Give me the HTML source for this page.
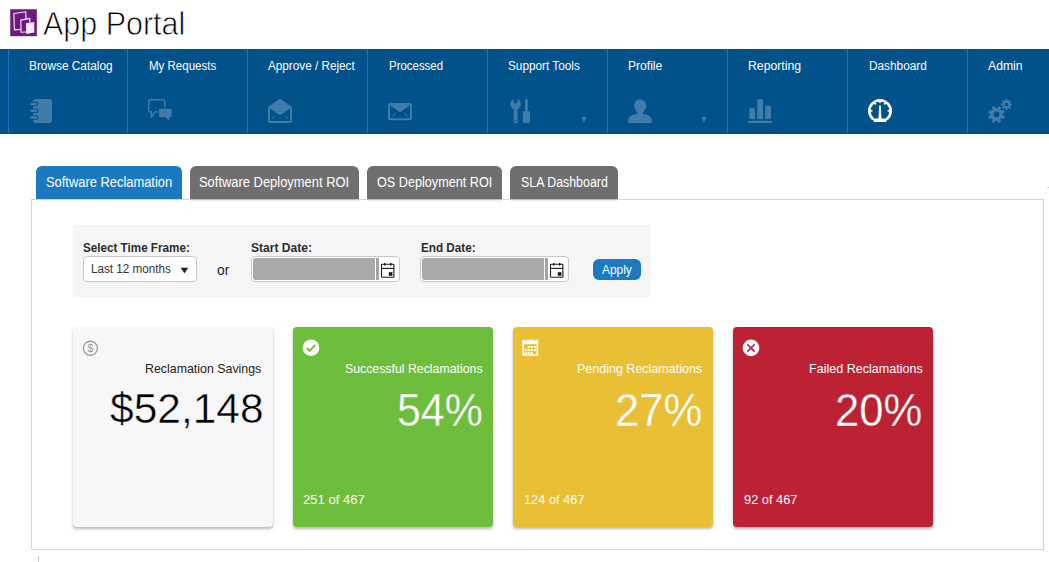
<!DOCTYPE html>
<html><head><meta charset="utf-8">
<style>
*{margin:0;padding:0;box-sizing:border-box}
html,body{width:1049px;height:562px;overflow:hidden;background:#fff;font-family:"Liberation Sans",sans-serif}
.a{position:absolute}
.s{position:absolute;overflow:visible}
.t{position:absolute;white-space:nowrap;transform-origin:0 0}
#nav{left:0;top:49px;width:1049px;height:85px;background:#01518a}
.sep{top:49px;width:1px;height:84px;background:#1a73c2}
.tab{top:166px;height:33px;border-radius:6px 6px 0 0}
#panel{left:31px;top:199px;width:1013px;height:351px;border:1px solid #d6d3d3}
#filter{left:73px;top:225px;width:578px;height:72px;background:#f5f5f5}
.card{top:327px;width:200px;height:200px;border-radius:4px;box-shadow:0 2px 3px rgba(0,0,0,0.28)}
.inp{top:256px;height:26px;border:1px solid #c9c9c9;border-radius:4px;background:#fff}
.gray{top:258px;height:22px;background:#a9a9a9;border-radius:3px 0 0 3px}
</style></head>
<body>
<div class="a" id="nav"></div>
<div class="a" style="left:0;top:133px;width:1049px;height:1px;background:#004a80"></div>
<div class="a sep" style="left:8px"></div><div class="a sep" style="left:127px"></div><div class="a sep" style="left:247px"></div><div class="a sep" style="left:367px"></div><div class="a sep" style="left:487px"></div><div class="a sep" style="left:607px"></div><div class="a sep" style="left:727px"></div><div class="a sep" style="left:847px"></div><div class="a sep" style="left:967px"></div>

<svg class="s" style="left:0;top:49px" width="1049" height="85" viewBox="0 49 1049 85">
 <!-- notebook -->
 <rect x="33" y="99" width="19" height="24" rx="3" fill="#407ca7"/>
 <g stroke-linecap="round">
  <line x1="31.5" y1="104" x2="36" y2="104" stroke="#01518a" stroke-width="4.6"/>
  <line x1="31.5" y1="110.8" x2="36" y2="110.8" stroke="#01518a" stroke-width="4.6"/>
  <line x1="31.5" y1="117.5" x2="36" y2="117.5" stroke="#01518a" stroke-width="4.6"/>
  <line x1="31.5" y1="104" x2="36" y2="104" stroke="#407ca7" stroke-width="2.4"/>
  <line x1="31.5" y1="110.8" x2="36" y2="110.8" stroke="#407ca7" stroke-width="2.4"/>
  <line x1="31.5" y1="117.5" x2="36" y2="117.5" stroke="#407ca7" stroke-width="2.4"/>
 </g>
 <!-- chat -->
 <path d="M150.5,99.7 H163 a1.8,1.8 0 0 1 1.8,1.8 V110 a1.8,1.8 0 0 1 -1.8,1.8 H155.5 L151.3,117 V111.8 H150.5 a1.8,1.8 0 0 1 -1.8,-1.8 V101.5 a1.8,1.8 0 0 1 1.8,-1.8 Z" fill="none" stroke="#407ca7" stroke-width="1.5" stroke-linejoin="round"/>
 <path d="M160,108.2 H170.5 a1.6,1.6 0 0 1 1.6,1.6 V116.2 a1.6,1.6 0 0 1 -1.6,1.6 H169.6 V122.4 L165.2,117.8 H160 a1.6,1.6 0 0 1 -1.6,-1.6 V109.8 a1.6,1.6 0 0 1 1.6,-1.6 Z" fill="#407ca7" stroke="#01518a" stroke-width="1.2"/>
 <!-- open envelope -->
 <path d="M269,107.5 L280,99.8 L291,107.5 V121 a1,1 0 0 1 -1,1 H270 a1,1 0 0 1 -1,-1 Z" fill="none" stroke="#407ca7" stroke-width="2" stroke-linejoin="round"/>
 <path d="M269,107.5 L280,99.8 L291,107.5 L280,114.8 Z" fill="#407ca7" stroke="#407ca7" stroke-width="1" stroke-linejoin="round"/>
 <line x1="272.5" y1="118.5" x2="275.5" y2="115.3" stroke="#407ca7" stroke-width="1"/>
 <line x1="287.5" y1="118.5" x2="284.5" y2="115.3" stroke="#407ca7" stroke-width="1"/>
 <!-- envelope -->
 <rect x="389" y="104" width="22" height="15.2" rx="1.5" fill="none" stroke="#407ca7" stroke-width="2"/>
 <path d="M389.5,104.5 H410.5 L400,111.8 Z" fill="#407ca7" stroke="#407ca7" stroke-width="1" stroke-linejoin="round"/>
 <line x1="392.5" y1="116.5" x2="395.5" y2="113.3" stroke="#407ca7" stroke-width="1"/>
 <line x1="407.5" y1="116.5" x2="404.5" y2="113.3" stroke="#407ca7" stroke-width="1"/>
 <!-- tools -->
 <path d="M513.8,99 A5.6,5.6 0 0 0 513.6,109.2 V121.4 a2,2 0 0 0 4,0 V109.2 A5.6,5.6 0 0 0 517.4,99 V103.2 H513.8 Z" fill="#407ca7"/>
 <circle cx="515.6" cy="120.8" r="0.8" fill="#01518a"/>
 <rect x="525" y="99" width="2.8" height="12" rx="0.9" fill="#407ca7"/>
 <rect x="522.8" y="111" width="7.3" height="12.1" rx="2" fill="#407ca7"/>
 <path d="M581,117 H586.8 L583.9,122.4 Z" fill="#407ca7"/>
 <path d="M701,117 H706.8 L703.9,122.4 Z" fill="#407ca7"/>
 <!-- person -->
 <path d="M640,99.6 c-3.6,0 -5.6,2.6 -5.6,6 c-0.9,0.3 -0.8,2.2 0.3,2.4 c0.6,2.2 1.8,3.6 2.6,4.3 V113.8 C633,114.8 628.2,116 628.2,120.5 V122.9 H651.8 V120.5 C651.8,116 647,114.8 643,113.8 V112.3 c0.8,-0.7 2,-2.1 2.6,-4.3 c1.1,-0.2 1.2,-2.1 0.3,-2.4 c0,-3.4 -2.3,-6 -5.9,-6 Z" fill="#407ca7"/>
 <!-- bar chart -->
 <rect x="749.3" y="108" width="5.7" height="11" rx="1.5" fill="#407ca7"/>
 <rect x="757.2" y="99" width="5.8" height="20" rx="1.5" fill="#407ca7"/>
 <rect x="765.2" y="105.6" width="5.8" height="13.4" rx="1.5" fill="#407ca7"/>
 <rect x="748" y="120.8" width="24" height="2.1" rx="0.8" fill="#407ca7"/>
 <!-- gauge -->
 <path d="M873.2,119.2 A10.7,10.7 0 1 1 886.8,119.2" fill="none" stroke="#fff" stroke-width="2.6"/>
 <path d="M872.6,118.4 H887.4 L886,122 H874 Z" fill="#fff"/>
 <path d="M879.2,105.6 H880.8 L881.6,120 H878.4 Z" fill="#fff"/>
 <g stroke="#fff" stroke-width="1.7">
  <line x1="880" y1="100.5" x2="880" y2="103"/>
  <line x1="874.3" y1="102.6" x2="875.7" y2="104.4"/>
  <line x1="885.7" y1="102.6" x2="884.3" y2="104.4"/>
  <line x1="870" y1="110.8" x2="872.4" y2="110.8"/>
  <line x1="890" y1="110.8" x2="887.6" y2="110.8"/>
 </g>
 <!-- gears -->
 <g transform="translate(988,99)" fill="#407ca7" fill-rule="evenodd">
  <path d="M14.64,16.33 L16.88,17.44 L15.80,20.05 L13.43,19.26 L12.26,20.43 L13.05,22.80 L10.44,23.88 L9.33,21.64 L7.67,21.64 L6.56,23.88 L3.95,22.80 L4.74,20.43 L3.57,19.26 L1.20,20.05 L0.12,17.44 L2.36,16.33 L2.36,14.67 L0.12,13.56 L1.20,10.95 L3.57,11.74 L4.74,10.57 L3.95,8.20 L6.56,7.12 L7.67,9.36 L9.33,9.36 L10.44,7.12 L13.05,8.20 L12.26,10.57 L13.43,11.74 L15.80,10.95 L16.88,13.56 L14.64,14.67 Z M11.40,15.50 A2.9,2.9 0 1,0 5.60,15.50 A2.9,2.9 0 1,0 11.40,15.50 Z"/>
  <path d="M22.37,4.47 L24.02,4.58 L24.02,6.42 L22.37,6.53 L21.96,7.51 L23.06,8.76 L21.76,10.06 L20.51,8.96 L19.53,9.37 L19.42,11.02 L17.58,11.02 L17.47,9.37 L16.49,8.96 L15.24,10.06 L13.94,8.76 L15.04,7.51 L14.63,6.53 L12.98,6.42 L12.98,4.58 L14.63,4.47 L15.04,3.49 L13.94,2.24 L15.24,0.94 L16.49,2.04 L17.47,1.63 L17.58,-0.02 L19.42,-0.02 L19.53,1.63 L20.51,2.04 L21.76,0.94 L23.06,2.24 L21.96,3.49 Z M20.20,5.50 A1.7,1.7 0 1,0 16.80,5.50 A1.7,1.7 0 1,0 20.20,5.50 Z"/>
 </g>
</svg>


<svg class="s" style="left:9px;top:8px" width="29" height="29" viewBox="9 8 29 29">
 <rect x="9.6" y="8.6" width="27.8" height="28" fill="#d8e4dc"/>
 <rect x="10.3" y="9.3" width="26.5" height="26.8" fill="#6d1a7e"/>
 <path d="M13.9,13.5 L25.8,11.8 L26.3,29 L14.4,29.9 Z" fill="none" stroke="#efe4f1" stroke-width="1.15" stroke-linejoin="round"/>
 <path d="M20.8,20.1 L29.8,18.4 L30.1,31.7 L21.1,32.3 Z" fill="#6d1a7e" stroke="#efe4f1" stroke-width="1.15" stroke-linejoin="round"/>
 <path d="M26,23.4 L34.2,22 L34.3,32.5 L26.2,34 Z" fill="#f3eef4"/>
 <path d="M26,23.4 L29.9,22.7 L29.9,24.5 L26,25 Z" fill="#efe4f1"/>
</svg>

<div class="a tab" style="left:36px;width:146px;background:#1b79c2"></div>
<div class="a tab" style="left:190px;width:169px;background:#6f6f6f"></div>
<div class="a tab" style="left:367px;width:135px;background:#6f6f6f"></div>
<div class="a tab" style="left:510px;width:108px;background:#6f6f6f"></div>
<div class="a" id="panel"></div>
<div class="a" style="left:190px;top:199px;width:169px;height:3px;background:linear-gradient(rgba(0,0,0,0.13),rgba(0,0,0,0))"></div>
<div class="a" style="left:367px;top:199px;width:135px;height:3px;background:linear-gradient(rgba(0,0,0,0.13),rgba(0,0,0,0))"></div>
<div class="a" style="left:510px;top:199px;width:108px;height:3px;background:linear-gradient(rgba(0,0,0,0.13),rgba(0,0,0,0))"></div>
<div class="a" style="left:1047px;top:187px;width:2px;height:1px;background:#d0cccc"></div>
<div class="a" style="left:38px;top:556px;width:1px;height:6px;background:#c8c8c8"></div>
<div class="a" id="filter"></div>
<div class="a" style="left:83px;top:256px;width:114px;height:26px;border:1px solid #c9c9c9;border-radius:4px;background:#fff"></div>
<svg class="s" style="left:180px;top:267px" width="10" height="8" viewBox="180 267 10 8"><path d="M180.7,267.8 H188.2 L184.45,273.6 Z" fill="#222"/></svg>
<div class="a inp" style="left:251px;width:149px"></div>
<div class="a gray" style="left:253px;width:122px"></div>
<div class="a" style="left:376px;top:258px;width:3px;height:22px;background:#a3a3a3"></div>
<div class="a inp" style="left:420px;width:149px"></div>
<div class="a gray" style="left:422px;width:122px"></div>
<div class="a" style="left:545px;top:258px;width:3px;height:22px;background:#a3a3a3"></div>
<svg class="s" style="left:370px;top:254px" width="210" height="30" viewBox="370 254 210 30">
 <g fill="none" stroke="#1a1a1a" stroke-width="1.1">
  <rect x="381.5" y="264.3" width="12.4" height="13" rx="0.8"/>
  <line x1="381.5" y1="268.4" x2="393.9" y2="268.4"/>
  <line x1="550.5" y1="268.4" x2="562.9" y2="268.4"/>
  <rect x="550.5" y="264.3" width="12.4" height="13" rx="0.8"/>
 </g>
 <g fill="#1a1a1a">
  <rect x="384" y="263" width="1.4" height="2.6"/><rect x="390" y="263" width="1.4" height="2.6"/>
  <rect x="388.8" y="272.2" width="3.6" height="3.6"/>
  <rect x="553" y="263" width="1.4" height="2.6"/><rect x="559" y="263" width="1.4" height="2.6"/>
  <rect x="557.8" y="272.2" width="3.6" height="3.6"/>
 </g>
</svg>
<div class="a" style="left:593px;top:259px;width:48px;height:21px;background:#1b79c2;border-radius:6px"></div>
<div class="a card" style="left:73px;background:#f7f7f7"></div>
<div class="a card" style="left:293px;background:#6ebe3d"></div>
<div class="a card" style="left:513px;background:#e9bf35"></div>
<div class="a card" style="left:733px;background:#bd2234"></div>

<svg class="s" style="left:0;top:320px" width="1049" height="50" viewBox="0 320 1049 50">
 <circle cx="90.4" cy="348.3" r="7" fill="none" stroke="#a0a0a0" stroke-width="1.4"/>
 <text x="90.4" y="352.3" font-size="10.5" text-anchor="middle" fill="#999" font-family="Liberation Sans">$</text>
 <circle cx="311" cy="347.7" r="8.3" fill="#fff"/>
 <path d="M306.8,348 L309.6,350.9 L315.2,344.8" fill="none" stroke="#6ebe3d" stroke-width="1.9"/>
 <path d="M522.3,339.8 H524.6 L525.6,341 L526.6,339.8 H534.2 L535.2,341 L536.2,339.8 H538.2 V355.8 H522.3 Z" fill="#fff"/>
 <rect x="524.1" y="344.2" width="12.4" height="10.1" fill="#e9bf35"/>
 <rect x="527.6" y="346" width="2.1" height="2" fill="#fff"/><rect x="530.7" y="346" width="2.1" height="2" fill="#fff"/><rect x="533.9" y="346" width="2.1" height="2" fill="#fff"/><rect x="524.7" y="349.2" width="2.1" height="2" fill="#fff"/><rect x="527.6" y="349.2" width="2.1" height="2" fill="#fff"/><rect x="530.7" y="349.2" width="2.1" height="2" fill="#fff"/><rect x="533.9" y="349.2" width="2.1" height="2" fill="#fff"/><rect x="524.7" y="352.1" width="2.1" height="2" fill="#fff"/><rect x="527.6" y="352.1" width="2.1" height="2" fill="#fff"/><rect x="530.7" y="352.1" width="2.1" height="2" fill="#fff"/>
 <circle cx="751" cy="347.9" r="8.3" fill="#fff"/>
 <path d="M747.3,344.2 L754.7,351.6 M754.7,344.2 L747.3,351.6" stroke="#bd2234" stroke-width="1.6"/>
</svg>

<div class="t" style="left:43.00px;top:7px;font-size:33px;line-height:33px;font-weight:normal;color:#000;transform:scaleX(0.9230);-webkit-text-stroke:0.8px #fff;">App Portal</div><div class="t" style="left:29.30px;top:60px;font-size:12px;line-height:12px;font-weight:normal;color:#fff;transform:scaleX(0.9877);">Browse Catalog</div><div class="t" style="left:148.60px;top:60px;font-size:12px;line-height:12px;font-weight:normal;color:#fff;transform:scaleX(0.9597);">My Requests</div><div class="t" style="left:268.20px;top:60px;font-size:12px;line-height:12px;font-weight:normal;color:#fff;transform:scaleX(0.9768);">Approve / Reject</div><div class="t" style="left:388.60px;top:60px;font-size:12px;line-height:12px;font-weight:normal;color:#fff;transform:scaleX(0.9532);">Processed</div><div class="t" style="left:507.70px;top:60px;font-size:12px;line-height:12px;font-weight:normal;color:#fff;transform:scaleX(0.9812);">Support Tools</div><div class="t" style="left:628.30px;top:60px;font-size:12px;line-height:12px;font-weight:normal;color:#fff;transform:scaleX(1.0076);">Profile</div><div class="t" style="left:748.20px;top:60px;font-size:12px;line-height:12px;font-weight:normal;color:#fff;transform:scaleX(1.0203);">Reporting</div><div class="t" style="left:868.60px;top:60px;font-size:12px;line-height:12px;font-weight:normal;color:#fff;transform:scaleX(0.9857);">Dashboard</div><div class="t" style="left:988.30px;top:60px;font-size:12px;line-height:12px;font-weight:normal;color:#fff;transform:scaleX(1.0168);">Admin</div><div class="t" style="left:46.10px;top:175px;font-size:14px;line-height:14px;font-weight:normal;color:#fff;transform:scaleX(0.9209);">Software Reclamation</div><div class="t" style="left:199.40px;top:175px;font-size:14px;line-height:14px;font-weight:normal;color:#fff;transform:scaleX(0.9231);">Software Deployment ROI</div><div class="t" style="left:377.40px;top:175px;font-size:14px;line-height:14px;font-weight:normal;color:#fff;transform:scaleX(0.9036);">OS Deployment ROI</div><div class="t" style="left:520.60px;top:175px;font-size:14px;line-height:14px;font-weight:normal;color:#fff;transform:scaleX(0.8852);">SLA Dashboard</div><div class="t" style="left:83.20px;top:242px;font-size:12px;line-height:12px;font-weight:bold;color:#2b2b2b;transform:scaleX(0.9721);">Select Time Frame:</div><div class="t" style="left:251.30px;top:242px;font-size:12px;line-height:12px;font-weight:bold;color:#2b2b2b;transform:scaleX(1.0053);">Start Date:</div><div class="t" style="left:420.70px;top:242px;font-size:12px;line-height:12px;font-weight:bold;color:#2b2b2b;transform:scaleX(0.9744);">End Date:</div><div class="t" style="left:90.50px;top:263px;font-size:12px;line-height:12px;font-weight:normal;color:#333;transform:scaleX(0.9738);">Last 12 months</div><div class="t" style="left:217.20px;top:263px;font-size:14px;line-height:14px;font-weight:normal;color:#222;transform:scaleX(0.9854);">or</div><div class="t" style="left:601.80px;top:263px;font-size:13px;line-height:13px;font-weight:normal;color:#fff;transform:scaleX(0.9146);">Apply</div><div class="t" style="left:145.35px;top:362px;font-size:13px;line-height:13px;font-weight:normal;color:#222;transform:scaleX(0.9522);">Reclamation Savings</div><div class="t" style="left:344.60px;top:362px;font-size:13px;line-height:13px;font-weight:normal;color:#fff;transform:scaleX(0.9470);">Successful Reclamations</div><div class="t" style="left:577.04px;top:362px;font-size:13px;line-height:13px;font-weight:normal;color:#fff;transform:scaleX(0.9616);">Pending Reclamations</div><div class="t" style="left:808.53px;top:362px;font-size:13px;line-height:13px;font-weight:normal;color:#fff;transform:scaleX(0.9653);">Failed Reclamations</div><div class="t" style="left:110.30px;top:387px;font-size:43px;line-height:43px;font-weight:normal;color:#000;transform:scaleX(0.9882);-webkit-text-stroke:0.5px #f7f7f7;">$52,148</div><div class="t" style="left:396.77px;top:387px;font-size:46px;line-height:46px;font-weight:normal;color:#fff;transform:scaleX(0.9327);-webkit-text-stroke:0.35px #6ebe3d;">54%</div><div class="t" style="left:615.30px;top:387px;font-size:46px;line-height:46px;font-weight:normal;color:#fff;transform:scaleX(0.9488);-webkit-text-stroke:0.35px #e9bf35;">27%</div><div class="t" style="left:835.30px;top:387px;font-size:46px;line-height:46px;font-weight:normal;color:#fff;transform:scaleX(0.9488);-webkit-text-stroke:0.35px #bd2234;">20%</div><div class="t" style="left:303.00px;top:493px;font-size:13px;line-height:13px;font-weight:normal;color:#fff;transform:scaleX(1.0047);">251 of 467</div><div class="t" style="left:523.80px;top:493px;font-size:13px;line-height:13px;font-weight:normal;color:#fff;transform:scaleX(0.9850);">124 of 467</div><div class="t" style="left:743.80px;top:493px;font-size:13px;line-height:13px;font-weight:normal;color:#fff;transform:scaleX(0.9855);">92 of 467</div>
</body></html>
